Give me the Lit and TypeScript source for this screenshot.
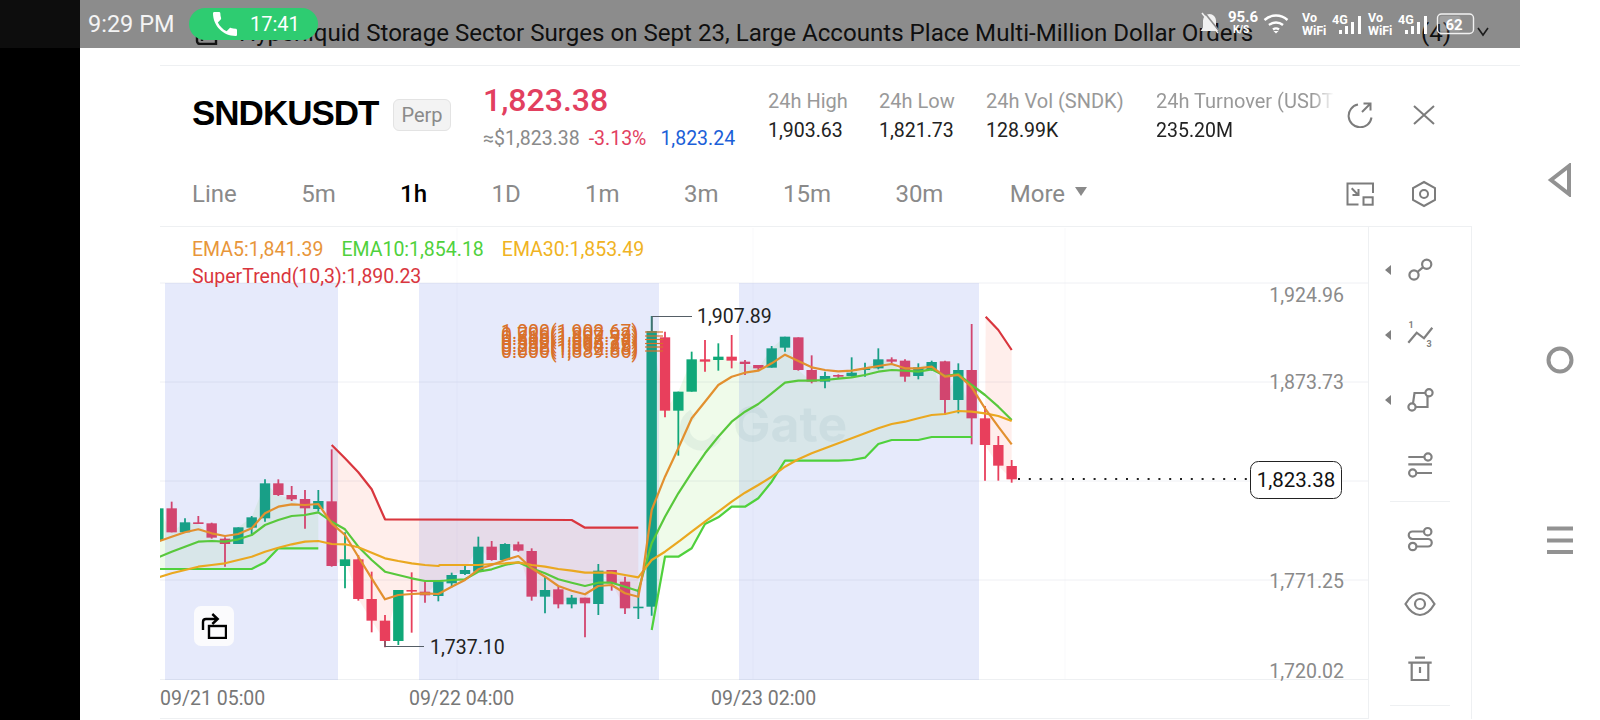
import { LitElement, html, css, svg } from 'lit';
import { customElement } from 'lit/decorators.js';

type Pt = [number, number];
// wickTop, bodyTop, bodyBottom, wickBottom, up
type Candle = [number, number, number, number, boolean];

const GREEN = '#10a878';
const RED = '#e83f5c';

const candleX = (i: number) => 155 + (10 + 40 * i) / 3;
const at = (ox: number, oy: number, pts: number[][]): Pt[] =>
  pts.map(([x, y]) => [ox + x / 3, oy + y / 3] as Pt);
const toCandles = (oy: number, rows: (number | boolean)[][]): Candle[] =>
  rows.map(([a, b, c, d, up]) => [
    oy + (a as number) / 3,
    oy + (b as number) / 3,
    oy + (c as number) / 3,
    oy + (d as number) / 3,
    up as boolean,
  ]);

const candles: Candle[] = [
  ...toCandles(440, [
    [205, 205, 300, 300, true], [185, 205, 277, 277, false], [235, 247, 277, 277, true],
    [228, 247, 252, 252, false], [248, 250, 293, 296, false], [292, 296, 312, 380, false],
    [262, 262, 312, 312, true], [228, 232, 263, 282, true], [118, 130, 235, 245, true],
    [118, 130, 165, 168, false], [138, 165, 178, 183, false], [150, 177, 205, 266, false],
    [150, 183, 207, 215, true], [28, 184, 378, 380, false], [277, 358, 378, 445, true],
    [345, 358, 477, 482, false], [395, 477, 542, 577, false], [525, 542, 603, 622, false],
    [450, 450, 603, 615, true], [397, 450, 454, 578, false], [425, 455, 466, 488, false],
    [425, 425, 468, 484, true],
  ]),
  ...toCandles(500, [
    [218, 225, 250, 262, true], [195, 210, 222, 225, true], [110, 140, 215, 215, true],
    [123, 140, 180, 182, false], [130, 132, 180, 182, true], [125, 133, 152, 155, false],
    [145, 153, 290, 302, false], [230, 270, 290, 340, true], [260, 268, 313, 325, false],
    [285, 293, 313, 325, true], [293, 293, 310, 412, false], [192, 212, 312, 345, true],
    [210, 210, 250, 272, false], [230, 245, 325, 342, false], [270, 320, 323, 357, true],
  ]),
  [316, 331, 606.7, 615.7, true],
  ...toCandles(280, [
    [155, 172, 392, 412, false], [335, 335, 392, 527, true], [215, 238, 335, 335, true],
    [180, 238, 245, 275, false], [190, 230, 240, 272, true], [165, 230, 242, 265, false],
    [240, 245, 252, 285, false], [255, 255, 265, 272, false], [198, 205, 263, 263, true],
    [170, 170, 203, 215, true], [172, 172, 270, 272, false], [226, 270, 305, 310, false],
    [275, 288, 305, 325, true], [283, 285, 290, 296, false], [232, 278, 288, 290, true],
    [248, 265, 270, 290, true], [205, 238, 265, 268, true], [232, 238, 245, 250, false],
    [238, 242, 290, 305, false], [250, 262, 288, 298, true], [242, 246, 270, 272, true],
    [242, 244, 360, 405, false], [250, 270, 360, 400, true], [132, 270, 415, 493, false],
    [378, 415, 495, 602, false], [468, 495, 557, 602, false], [540, 558, 598, 608, false],
  ]),
];

const closes = (from: number, to: number): Pt[] => {
  const out: Pt[] = [];
  for (let i = from; i <= to; i++) {
    const c = candles[i];
    out.push([candleX(i), c[4] ? c[1] : c[2]]);
  }
  return out;
};

const ema5: Pt[] = [
  ...at(155, 440, [[0, 308], [50, 290], [90, 277], [130, 268], [170, 280], [210, 288], [250, 282], [290, 265], [330, 220], [370, 200], [410, 193], [450, 195], [490, 192], [530, 250], [570, 285], [610, 350], [650, 415], [690, 478], [730, 465], [770, 462], [810, 460], [850, 462], [890, 440]]),
  ...at(440, 500, [[75, 240], [115, 208], [155, 195], [195, 180], [235, 168], [275, 205], [315, 230], [355, 258], [395, 272], [435, 283], [475, 258], [515, 255], [555, 280], [595, 290], [610, 210], [635, 30]]),
  ...at(630, 280, [[65, 690], [105, 590], [145, 505], [185, 415], [225, 365], [265, 315], [305, 290], [345, 278], [385, 272], [425, 250], [465, 224], [505, 243], [545, 262], [585, 270], [625, 274], [665, 272], [705, 265], [745, 258], [785, 252], [825, 265], [865, 265], [905, 260], [945, 290], [985, 285], [1025, 322], [1065, 385], [1105, 440], [1145, 493]]),
];
const ema10: Pt[] = [
  ...at(155, 440, [[0, 356], [50, 335], [90, 320], [130, 305], [170, 303], [210, 305], [250, 298], [290, 285], [330, 255], [370, 240], [410, 228], [450, 225], [490, 217], [530, 245], [570, 268], [610, 320], [650, 360], [690, 395], [730, 405], [770, 415], [810, 423], [850, 423]]),
  ...at(440, 500, [[0, 243], [35, 240], [75, 238], [115, 215], [155, 208], [195, 195], [235, 187], [275, 205], [315, 220], [355, 238], [395, 248], [435, 258], [475, 248], [515, 248], [555, 260], [595, 273], [635, 130]]),
  ...at(630, 280, [[105, 710], [145, 640], [185, 578], [225, 520], [265, 470], [305, 425], [345, 395], [385, 372], [425, 340], [465, 308], [505, 302], [545, 302], [585, 300], [625, 296], [665, 292], [705, 285], [745, 275], [785, 270], [825, 272], [865, 275], [905, 268], [945, 288], [985, 282], [1025, 315], [1065, 345], [1105, 380], [1145, 420]]),
];
const ema30: Pt[] = [
  ...at(155, 440, [[0, 415], [50, 400], [90, 390], [130, 380], [170, 375], [210, 370], [250, 360], [290, 350], [330, 335], [370, 323], [410, 313], [450, 305], [490, 303], [530, 312], [570, 313], [610, 322], [650, 338], [690, 355], [730, 363], [770, 370], [810, 375], [850, 378]]),
  ...at(440, 500, [[0, 195], [75, 195], [115, 195], [155, 192], [195, 190], [235, 187], [275, 195], [315, 200], [355, 207], [395, 212], [435, 218], [475, 218], [515, 218], [555, 225], [595, 232], [635, 180], [675, 155], [720, 122]]),
  ...at(630, 280, [[185, 755], [225, 725], [265, 695], [305, 665], [345, 638], [385, 615], [425, 590], [465, 560], [505, 538], [545, 520], [585, 505], [625, 490], [665, 475], [705, 460], [745, 445], [785, 432], [825, 425], [865, 415], [905, 405], [945, 402], [985, 393], [1025, 395], [1065, 400], [1105, 408], [1145, 423]]),
];
const stUp1: Pt[] = at(155, 440, [[0, 387], [290, 387], [330, 367], [370, 325], [490, 325]]);
const stUp2: Pt[] = [
  [651.7, 630],
  ...at(630, 280, [[105, 830], [145, 830], [185, 805], [225, 732], [265, 712], [305, 680], [345, 680], [385, 655], [425, 605], [465, 542], [505, 542], [625, 542], [665, 540], [705, 533], [745, 492], [785, 480], [865, 480], [905, 471], [1025, 471]]),
];
const stDown1: Pt[] = [
  ...at(155, 440, [[530, 15], [570, 55], [610, 97], [650, 148], [690, 238]]),
  ...at(440, 500, [[395, 60], [435, 83], [595, 83]]),
];
const stDown2: Pt[] = at(630, 280, [[1067, 110], [1105, 150], [1145, 210]]);

const fibs = ['1.000(1,902.67)', '0.786(1,899.93)', '0.618(1,897.78)', '0.500(1,896.27)', '0.382(1,894.75)', '0.236(1,892.88)', '0.000(1,889.86)'];

const pts = (p: Pt[]) => p.map(([x, y]) => `${x.toFixed(1)},${y.toFixed(1)}`).join(' ');

const tabs = ['Line', '5m', '1h', '1D', '1m', '3m', '15m', '30m'];
const stats = [
  { label: '24h High', value: '1,903.63', width: 111 },
  { label: '24h Low', value: '1,821.73', width: 107 },
  { label: '24h Vol (SNDK)', value: '128.99K', width: 170 },
  { label: '24h Turnover (USDT)', value: '235.20M', width: 178 },
];

const toolIcons = [
  { caret: true, art: svg`<circle cx="-6" cy="5" r="4.6"/><circle cx="6.7" cy="-5.7" r="4.6"/><path d="M-2.6 2 3.2-2.8"/>` },
  { caret: true, art: svg`<path d="M-11.7 7.7-3.3-2.3 4 3.3 12.3-7.3"/><text x="-9" y="-7" class="mini">1</text><text x="9" y="11.5" class="mini">3</text>` },
  { caret: true, art: svg`<circle cx="-8" cy="7" r="3.6"/><circle cx="9" cy="-7.3" r="3.6"/><path d="M-7 3.4-5.5-7H5.4M7.5-4V7H-4.4"/>` },
  { caret: false, art: svg`<path d="M-11.7-8H4.5M-11.7-.7H12M-3.6 8H12"/><circle cx="8" cy="-8" r="3.6"/><circle cx="-7.3" cy="8" r="3.6"/>` },
  { divider: true },
  { caret: false, art: svg`<circle cx="7.7" cy="-7.3" r="3.7"/><circle cx="-7.3" cy="7.5" r="3.7"/><path d="M4-7.5H-7.5A3.75 3.75 0 0 0-7.5 0H8A3.75 3.75 0 0 1 8 7.5H-3.6"/>` },
  { caret: false, art: svg`<path d="M-14.5 0Q-8-11 0-11T14.5 0Q8 11 0 11T-14.5 0Z"/><circle r="5"/>` },
  { caret: false, art: svg`<path d="M-5-11.3H5M-11.7-6.3H11.7M-8.3-6V11H8.3V-6M0-2V4"/>` },
  { divider: true },
];

@customElement('app-root')
export class AppRoot extends LitElement {
  static styles = css`
    :host {
      display: flex;
      position: relative;
      width: 1600px;
      height: 720px;
      overflow: hidden;
      background: #fff;
      font-family: Roboto, "Liberation Sans", sans-serif;
      color: #222;
    }
    .edge {
      width: 80px;
      background: #000;
      flex: none;
    }
    .page {
      width: 1440px;
      flex: none;
      padding-left: 80px;
      box-sizing: border-box;
    }
    .nav {
      width: 80px;
      flex: none;
      padding-top: 90px;
      display: grid;
      grid-auto-rows: 180px;
      align-items: center;
      justify-items: center;
      box-sizing: border-box;
    }

    .status {
      position: absolute;
      left: 0;
      top: 0;
      width: 1520px;
      height: 48px;
      background: rgba(0, 0, 0, 0.45);
      color: #fff;
      display: flex;
      align-items: center;
    }
    .status-edge {
      position: absolute;
      left: 0;
      top: 0;
      width: 80px;
      height: 48px;
      background: #0d0d0d;
    }
    .clock {
      position: relative;
      margin-left: 88px;
      font-size: 23.5px;
      width: 101px;
      color: #f4f4f4;
    }
    .call {
      width: 129px;
      height: 32px;
      border-radius: 16px;
      background: #2ecc71;
      display: flex;
      align-items: center;
      box-sizing: border-box;
      padding-left: 24px;
      gap: 13px;
      font-size: 20px;
    }
    .tray {
      position: absolute;
      left: 1198px;
      top: 0;
      height: 48px;
    }

    .news {
      height: 66px;
      box-sizing: border-box;
      border-bottom: 1px solid #eef0f2;
      display: flex;
      align-items: flex-start;
      font-size: 24.1px;
      line-height: 24px;
      padding: 21px 0 0 35px;
      color: #1c1c1c;
      white-space: nowrap;
    }
    .news svg { flex: none; margin-right: 20px; }
    .news .title { width: 1182px; flex: none; }
    .news .chev { margin: 4px 0 0 26px; }

    .head {
      height: 94px;
      display: flex;
      align-items: flex-start;
      padding-left: 32px;
      box-sizing: border-box;
    }
    .name {
      font-family: "Liberation Sans", Arial, sans-serif;
      font-weight: 700;
      font-size: 35px;
      letter-spacing: -1px;
      line-height: 38px;
      width: 186px;
      margin-top: 28px;
      color: #000;
      white-space: nowrap;
    }
    .badge {
      margin: 33px 0 0 15px;
      width: 58px;
      height: 32px;
      box-sizing: border-box;
      border: 1px solid #e3e3e3;
      border-radius: 6px;
      background: #f3f3f3;
      color: #8a8a8a;
      font-size: 20px;
      line-height: 30px;
      text-align: center;
    }
    .quote {
      width: 253px;
      margin: 16px 0 0 32px;
      flex: none;
    }
    .last {
      font-size: 32px;
      line-height: 36px;
      font-weight: 500;
      color: #e2405f;
    }
    .sub {
      display: flex;
      gap: 9px;
      margin-top: 9px;
      font-size: 19.5px;
      line-height: 24px;
      color: #8a8a8a;
      white-space: nowrap;
    }
    .sub .down { color: #e2405f; }
    .sub .mark { color: #1c5fd8; margin-left: 5px; }
    .stats {
      display: flex;
      margin: 21px 0 0 32px;
    }
    .stat {
      flex: none;
      overflow: hidden;
      white-space: nowrap;
      font-size: 19.5px;
      line-height: 29px;
    }
    .stat .k { color: #999; font-size: 20px; }
    .stat .v { color: #222; }
    .stat.fade {
      -webkit-mask-image: linear-gradient(to right, #000 88%, transparent);
      mask-image: linear-gradient(to right, #000 88%, transparent);
    }
    .actions {
      display: flex;
      gap: 38px;
      margin: 36px 0 0 13px;
    }
    .actions svg, .tab-tools svg {
      fill: none;
      stroke: #7c7c7c;
      stroke-width: 2;
      display: block;
    }

    .tabs {
      height: 67px;
      margin-right: 48px;
      box-sizing: border-box;
      border-bottom: 1px solid #eef0f2;
      display: flex;
      align-items: center;
      padding: 2px 35px 0 32px;
      gap: 64.4px;
      font-size: 24px;
      color: #8a8a8a;
    }
    .tab.on { color: #000; font-weight: 500; }
    .more { display: flex; align-items: center; gap: 10px; margin-left: 2px; }
    .more i {
      width: 0;
      height: 0;
      border: 6px solid transparent;
      border-top: 9px solid #8a8a8a;
      border-bottom: 0;
      margin-top: -5px;
    }
    .tab-tools {
      margin-left: auto;
      display: flex;
      gap: 37px;
      align-items: center;
    }

    .body {
      display: flex;
      height: 492px;
    }
    .chart {
      position: relative;
      width: 1208px;
      height: 492px;
      flex: none;
    }
    .chart > svg { display: block; font-family: Roboto, sans-serif; }
    .legend {
      position: absolute;
      left: 32px;
      top: 10px;
      font-size: 19.5px;
      line-height: 26.5px;
      white-space: nowrap;
    }
    .legend .row { display: flex; gap: 18px; }
    .ema5 { color: #e8963a; }
    .ema10 { color: #4fd13c; }
    .ema30 { color: #f0b323; }
    .st { color: #d9363e; }
    .share {
      position: absolute;
      left: 34px;
      top: 379px;
      width: 40px;
      height: 40px;
      border-radius: 7px;
      background: #fbfbfd;
      display: flex;
      align-items: center;
      justify-content: center;
    }

    .tools {
      width: 104px;
      flex: none;
      box-sizing: border-box;
      border-left: 1px solid #eef0f2;
      border-right: 1px solid #eef0f2;
      padding-top: 10px;
    }
    .tool {
      height: 65px;
      display: flex;
      align-items: center;
      justify-content: center;
      position: relative;
    }
    .tool svg {
      fill: none;
      stroke: #808080;
      stroke-width: 2.2;
      display: block;
    }
    .tool svg .mini {
      font-size: 9px;
      fill: #808080;
      stroke: none;
      text-anchor: middle;
      font-weight: 700;
    }
    .caret {
      position: absolute;
      left: 16px;
      width: 0;
      height: 0;
      border: 5px solid transparent;
      border-right: 6px solid #808080;
      border-left: 0;
    }
    .rule {
      height: 9px;
      display: flex;
      align-items: center;
      justify-content: center;
    }
    .rule::after {
      content: '';
      width: 60px;
      height: 1px;
      background: #eef0f2;
    }
    .nav svg {
      display: block;
      fill: none;
      stroke: #929292;
      stroke-width: 4;
    }
  `;

  private line(points: Pt[], color: string, w = 2.2) {
    return svg`<polyline points=${pts(points)} fill="none" stroke=${color} stroke-width=${w} stroke-linejoin="round"/>`;
  }

  private fill(top: Pt[], bottom: Pt[], color: string) {
    return svg`<polygon points=${pts([...top, ...[...bottom].reverse()])} fill=${color}/>`;
  }

  private renderCandle(c: Candle, i: number) {
    const x = candleX(i);
    const color = c[4] ? GREEN : RED;
    return svg`
      <line x1=${x} x2=${x} y1=${c[0]} y2=${c[3]} stroke=${color} stroke-width="1.8"/>
      <rect x=${x - 5.2} y=${c[1]} width="10.4" height=${Math.max(c[2] - c[1], 1.6)} fill=${color}/>
    `;
  }

  private renderPlot() {
    // session bands sit over the candles, which is why reds go pinker inside them
    const band = (a: number, b: number) =>
      svg`<rect x=${a} y="283" width=${b - a} height="397" fill="rgb(75,108,228)" fill-opacity=".14"/>`;
    const yLabels: [string, number][] = [['1,924.96', 295], ['1,873.73', 382], ['1,771.25', 581], ['1,720.02', 671]];
    const xLabels: [string, number][] = [['09/21 05:00', 160], ['09/22 04:00', 409], ['09/23 02:00', 711]];
    const dots = [];
    for (let x = 1018; x < 1246; x += 10.8) dots.push(x);
    return svg`
      <svg width="1208" height="492" viewBox="160 227 1208 492">
        ${[283, 382, 481, 580].map((y) => svg`<line x1="160" x2="1368" y1=${y} y2=${y} stroke="#e8eaf0" stroke-opacity=".7"/>`)}
        ${[457, 753, 1065].map((x) => svg`<line x1=${x} x2=${x} y1="228" y2="680" stroke="#e8eaf0" stroke-opacity=".3"/>`)}
        <line x1="160" x2="1368" y1="679.5" y2="679.5" stroke="#eef0f2"/>
        <line x1="160" x2="1368" y1="718.5" y2="718.5" stroke="#eef0f2"/>

        ${this.fill(closes(0, 12), stUp1, 'rgba(110,220,60,.11)')}
        ${this.fill(closes(37, 61), stUp2, 'rgba(110,220,60,.11)')}
        ${this.fill(stDown1, closes(13, 36), 'rgba(255,90,60,.1)')}
        ${this.fill(stDown2, closes(62, 64), 'rgba(255,90,60,.1)')}

        <g opacity=".09">
          <path d="M693 414a17 17 0 1 0 24 22" fill="none" stroke="#5f8f8f" stroke-width="10"/>
          <text x="733" y="442" font-size="50" font-weight="700" font-family="Inter, sans-serif" fill="#5f8f8f">Gate</text>
        </g>

        ${candles.map((c, i) => this.renderCandle(c, i))}
        ${band(165, 338)}${band(419, 659)}${band(739, 979)}

        ${this.line(stUp1, '#4fd13c')}
        ${this.line(stUp2, '#4fd13c')}
        ${this.line(stDown1, '#d9363e')}
        ${this.line(stDown2, '#d9363e')}
        ${this.line(ema10, '#58c83c')}
        ${this.line(ema30, '#eaa820')}
        ${this.line(ema5, '#e2902f')}

        <g fill="#d9702a" font-size="19.5">
          ${fibs.map((t, i) => svg`<text x="501" y=${339 + i * 3.2}>${t}</text>`)}
        </g>
        <g stroke="#d9702a" stroke-width="1.2">
          ${[332, 336, 339.5, 343.5, 347, 351].map((y) => svg`<line x1="645" x2="663" y1=${y} y2=${y}/>`)}
        </g>

        <path d="M652 331V316.5H692" fill="none" stroke="#555e66" stroke-width="1.2"/>
        <text x="697" y="323" font-size="19.5" fill="#222">1,907.89</text>
        <path d="M385 641V646.5H424" fill="none" stroke="#555e66" stroke-width="1.2"/>
        <text x="430" y="654" font-size="19.5" fill="#222">1,737.10</text>

        ${dots.map((x) => svg`<rect x=${x} y="478" width="2" height="2" fill="#222"/>`)}
        <rect x="1250.5" y="461.5" width="91" height="37" rx="8" fill="#fff" stroke="#222"/>
        <text x="1296" y="487" text-anchor="middle" font-size="20.5" fill="#111">1,823.38</text>

        ${yLabels.map(([t, y]) => svg`<text x="1344" y=${y + 7} text-anchor="end" font-size="19.5" fill="#8a8a8a">${t}</text>`)}
        ${xLabels.map(([t, x]) => svg`<text x=${x} y="705" font-size="19.5" fill="#777">${t}</text>`)}
      </svg>
    `;
  }

  private renderTray() {
    return html`
      <svg class="tray" width="290" height="48" viewBox="1198 0 290 48" fill="#fff">
        <path d="M1209.500 14a6.500 6.500 0 0 0-6.500 6.500v7l-2.500 3.500h18l-2.500-3.500v-7a6.500 6.500 0 0 0-6.500-6.500z" fill="#f1f1f1"/>
        <path d="M1202 13 1218 33" stroke="#f1f1f1" stroke-width="1.600"/>
        <path d="M1204 12 1220 32" stroke="#8c8c8c" stroke-width="1.600"/>
        <text x="1228" y="22" font-size="15" font-weight="700" font-family="Roboto">95.6</text>
        <text x="1233" y="33" font-size="10" font-weight="700" font-family="Roboto">K/S</text>
        <g fill="none" stroke="#fff" stroke-width="2.400">
          <path d="M1264.500 20a17 17 0 0 1 23 0"/>
          <path d="M1269 25a11 11 0 0 1 14 0"/>
          <path d="M1273 29.500a5 5 0 0 1 6 0"/>
        </g>
        <path d="M1273.500 31h5l-2.500 2.500z"/>
        <g font-size="12.500" font-weight="700" font-family="Roboto">
          <text x="1302" y="22">Vo</text><text x="1302" y="35">WiFi</text>
          <text x="1368" y="22">Vo</text><text x="1368" y="35">WiFi</text>
          <text x="1332" y="24">4G</text><text x="1398" y="24">4G</text>
        </g>
        <rect x="1339" y="30" width="3" height="4"/><rect x="1345" y="26" width="3" height="8"/><rect x="1351" y="22" width="3" height="12"/><rect x="1358" y="16" width="3" height="18"/>
        <rect x="1405" y="30" width="3" height="4"/><rect x="1411" y="26" width="3" height="8"/><rect x="1417" y="22" width="3" height="12"/><rect x="1424" y="16" width="3" height="18"/>
        <rect x="1437.500" y="14" width="36" height="19.500" rx="4" fill="none" stroke="#f1f1f1" stroke-width="1.400"/>
        <rect x="1439.500" y="16" width="21" height="15.500" rx="2" fill="rgba(255,255,255,.18)"/>
        <text x="1454" y="29.500" font-size="15" font-weight="700" font-family="Roboto" text-anchor="middle">62</text>
      </svg>
    `;
  }

  render() {
    return html`
      <div class="edge"></div>
      <div class="page">
        <div class="news">
          <svg width="24" height="24" viewBox="0 0 24 24" fill="none" stroke="#222" stroke-width="2.400">
            <path d="M2 14v6a3 3 0 0 0 3 3h16V14"/><path d="M7 14v6"/>
          </svg>
          <span class="title">Hyperliquid Storage Sector Surges on Sept 23, Large Accounts Place Multi-Million Dollar Orders</span>
          <span>(4)</span>
          <svg class="chev" width="12" height="12" viewBox="0 0 12 12" fill="none" stroke="#333" stroke-width="1.600"><path d="M1 3l5 7 5-7"/></svg>
        </div>

        <div class="head">
          <div class="name">SNDKUSDT</div>
          <div class="badge">Perp</div>
          <div class="quote">
            <div class="last">1,823.38</div>
            <div class="sub">
              <span>≈$1,823.38</span><span class="down">-3.13%</span><span class="mark">1,823.24</span>
            </div>
          </div>
          <div class="stats">
            ${stats.map(
              (s, i) => html`<div class="stat ${i === 3 ? 'fade' : ''}" style="width:${s.width}px">
                <div class="k">${s.label}</div>
                <div class="v">${s.value}</div>
              </div>`
            )}
          </div>
          <div class="actions">
            <svg width="26" height="26" viewBox="0 0 26 26">
              <path d="M11 2.500a11.500 11.500 0 1 0 13.500 13"/><path d="M15 10 23 2M16.500 1.500H23.500V8.500"/>
            </svg>
            <svg width="26" height="26" viewBox="0 0 26 26"><path d="M3 4 23 22M23 4 3 22"/></svg>
          </div>
        </div>

        <div class="tabs">
          ${tabs.map((t) => html`<div class="tab ${t === '1h' ? 'on' : ''}">${t}</div>`)}
          <div class="more">More<i></i></div>
          <div class="tab-tools">
            <svg width="28" height="24" viewBox="0 0 28 24">
              <path d="M12.500 22.500H1.500V1.500H27V11"/><rect x="17.500" y="15.300" width="9.200" height="7.400"/>
              <path d="M5.700 6.300 12 12.700M12.500 7V13H6.500"/>
            </svg>
            <svg width="26" height="28" viewBox="0 0 26 28">
              <path d="M13 2 24 8V20L13 26 2 20V8Z"/><circle cx="13" cy="14" r="4"/>
            </svg>
          </div>
        </div>

        <div class="body">
          <div class="chart">
            ${this.renderPlot()}
            <div class="legend">
              <div class="row">
                <span class="ema5">EMA5:1,841.39</span>
                <span class="ema10">EMA10:1,854.18</span>
                <span class="ema30">EMA30:1,853.49</span>
              </div>
              <div class="st">SuperTrend(10,3):1,890.23</div>
            </div>
            <div class="share">
              <svg width="26" height="26" viewBox="0 0 26 26" fill="none" stroke="#000" stroke-width="2.400">
                <path d="M2 17V9Q2 6 5 6H16.700M11.300 1 16.700 6 11.300 11"/>
                <rect x="8" y="13" width="17" height="12"/>
              </svg>
            </div>
          </div>
          <div class="tools">
            ${toolIcons.map((t) =>
              t.divider
                ? html`<div class="rule"></div>`
                : html`<div class="tool">
                    ${t.caret ? html`<span class="caret"></span>` : ''}
                    <svg width="32" height="32" viewBox="-16 -16 32 32">${t.art}</svg>
                  </div>`
            )}
          </div>
        </div>
      </div>
      <div class="nav">
        <svg width="26" height="34" viewBox="0 0 26 34"><path d="M22 3 4 17 22 31Z"/></svg>
        <svg width="30" height="30" viewBox="0 0 30 30"><circle cx="15" cy="15" r="11.500"/></svg>
        <svg width="26" height="30" viewBox="0 0 26 30"><path d="M0 3.500H26M0 15.500H26M0 27H26"/></svg>
      </div>

      <div class="status">
        <div class="status-edge"></div>
        <div class="clock">9:29 PM</div>
        <div class="call">
          <svg width="24" height="24" viewBox="3 3 18 18" fill="#fff">
            <path d="M6.620 10.790c1.440 2.830 3.760 5.140 6.590 6.590l2.200-2.200c.27-.27.67-.36 1.020-.24 1.120.37 2.330.57 3.570.57.55 0 1 .45 1 1V20c0 .55-.45 1-1 1-9.390 0-17-7.610-17-17 0-.55.45-1 1-1h3.500c.55 0 1 .45 1 1 0 1.250.2 2.450.57 3.570.11.35.03.74-.25 1.020l-2.200 2.200z"/>
          </svg>
          <span>17:41</span>
        </div>
        ${this.renderTray()}
      </div>
    `;
  }
}
